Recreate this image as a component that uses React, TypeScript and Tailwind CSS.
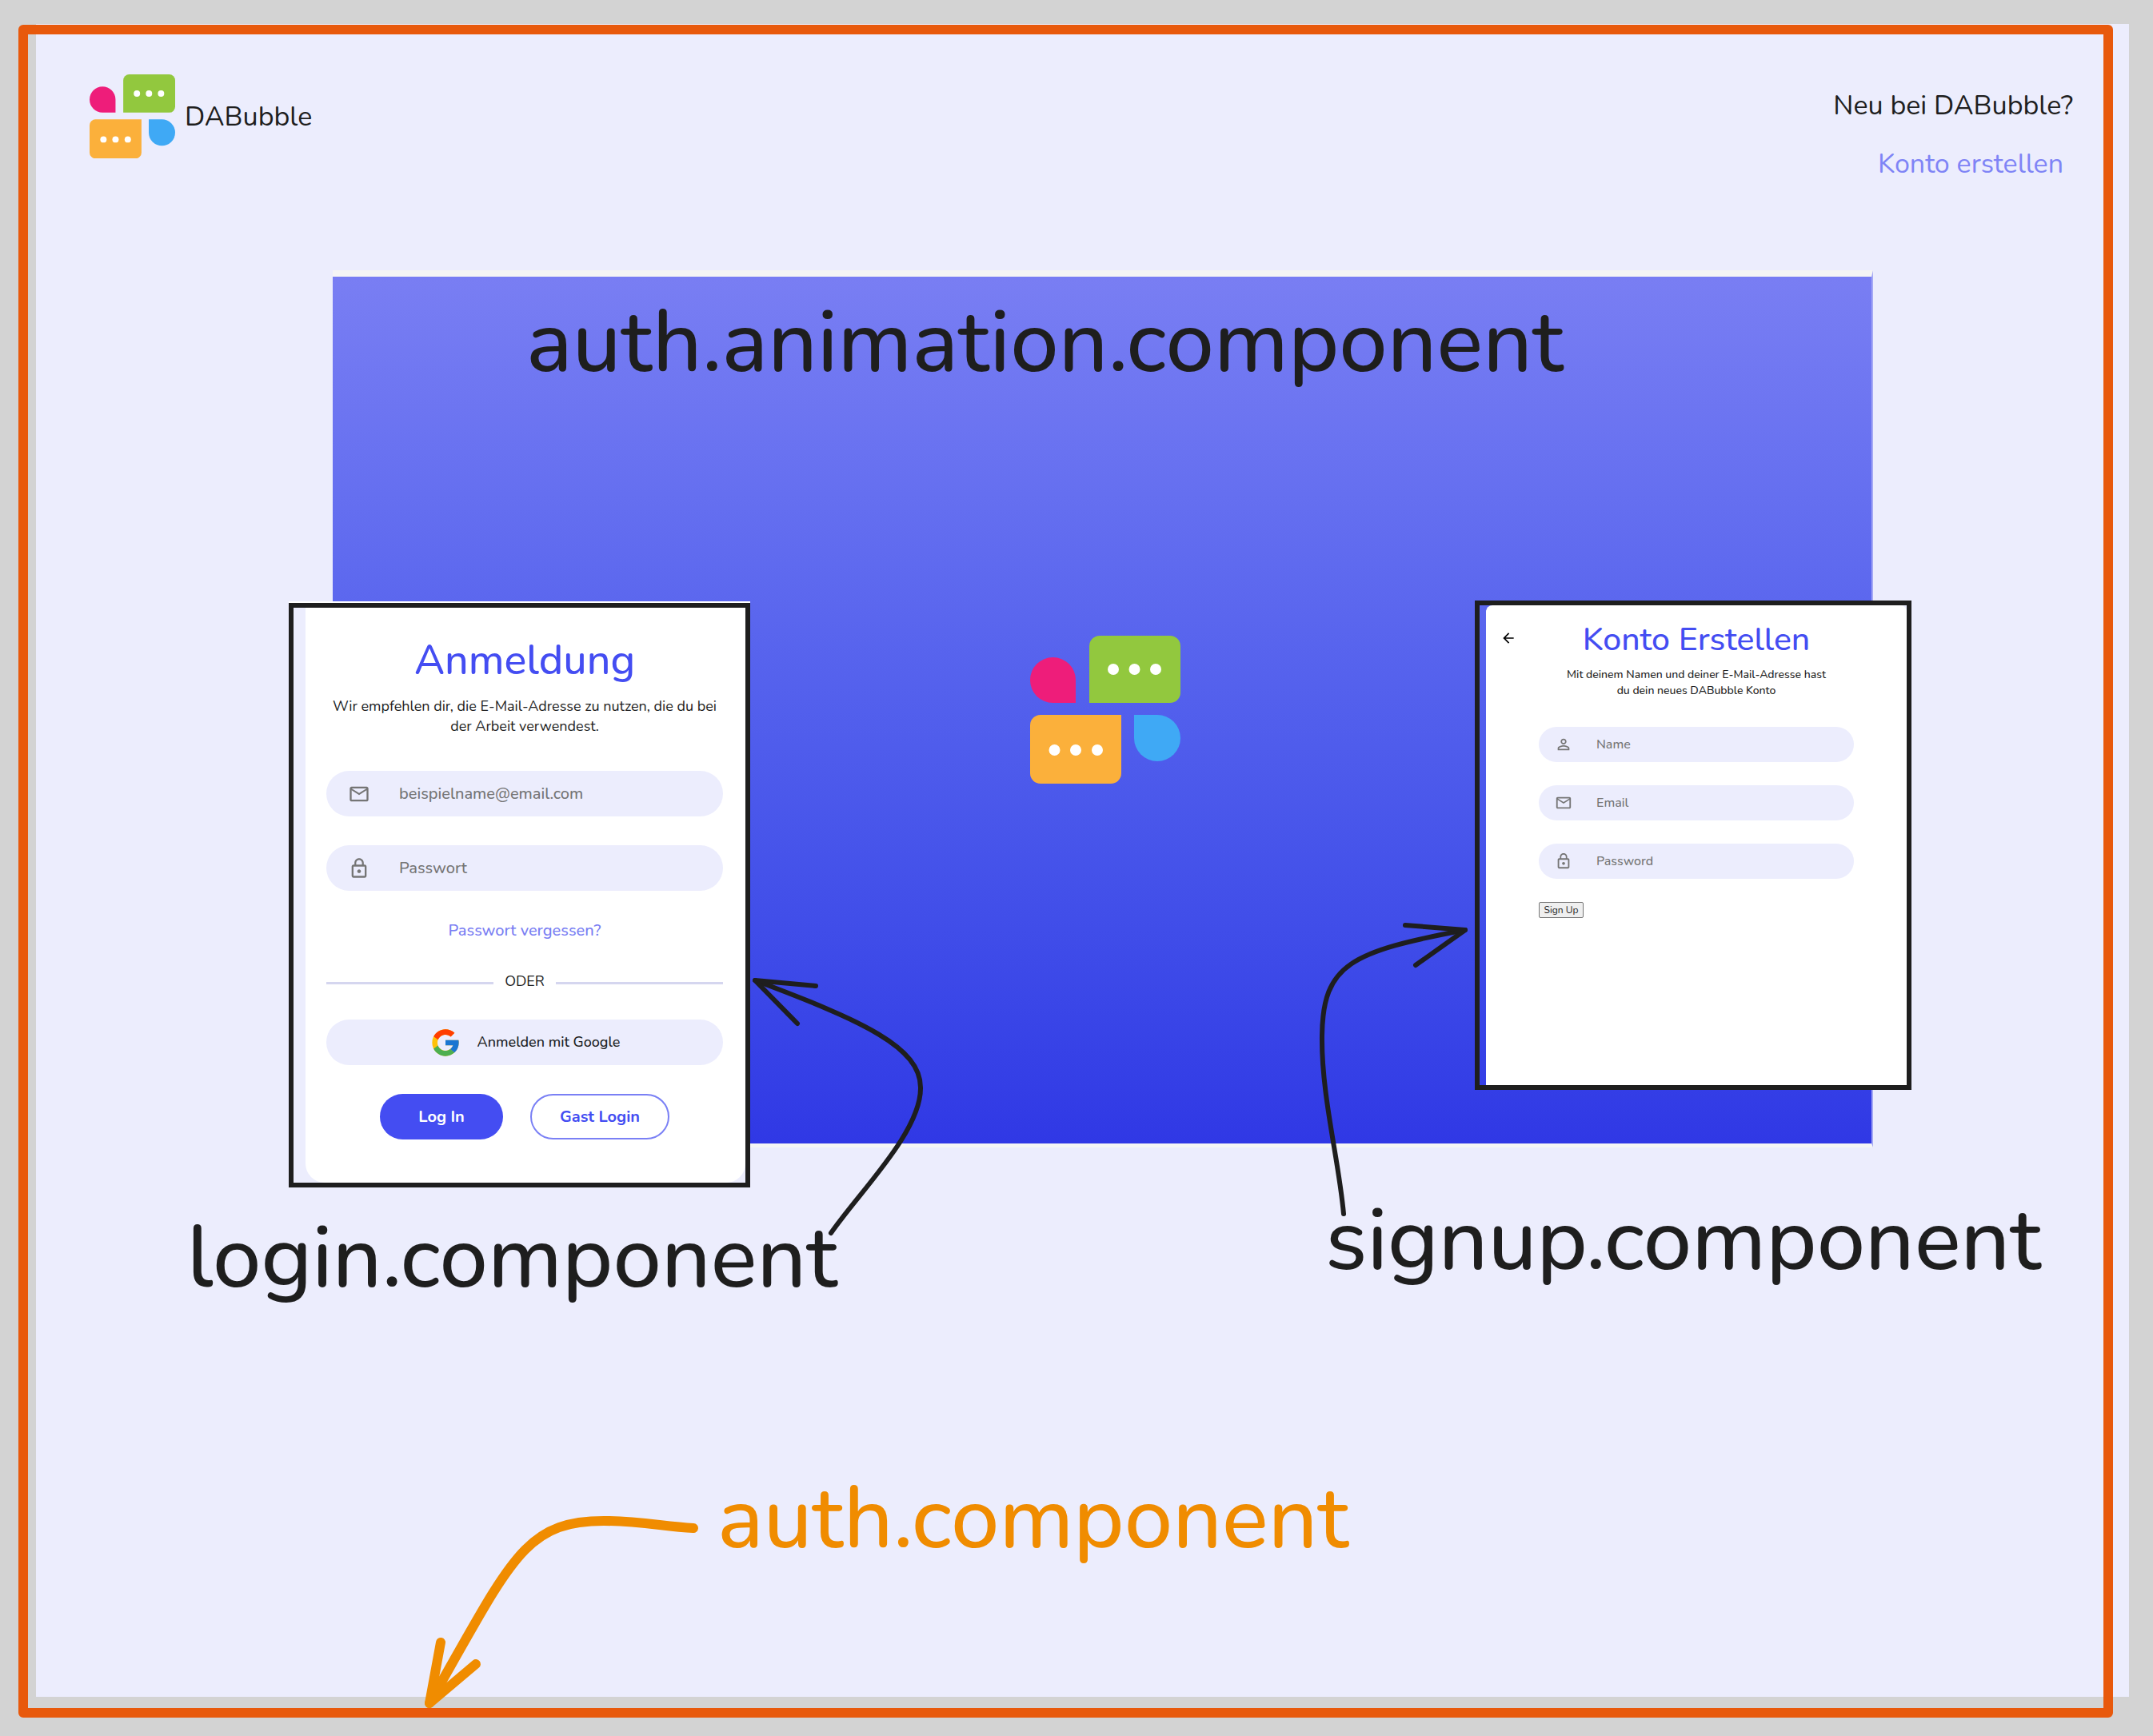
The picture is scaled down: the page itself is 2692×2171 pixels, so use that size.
import React from "react";
import { MdArrowBack, MdLockOutline, MdMailOutline, MdPersonOutline } from "react-icons/md";
import { FcGoogle } from "react-icons/fc";

function BubbleLogo({ className }: { className: string }) {
  return (
    <svg viewBox="0 0 188 185" className={className} role="img" aria-label="DABubble logo">
      <path d="M28.5 27A28.5 28.5 0 0 1 57 55.5V84H28.5A28.5 28.5 0 0 1 28.5 27Z" fill="#ee1d7a" />
      <path d="M87 0H175A13 13 0 0 1 188 13V71A13 13 0 0 1 175 84H74V13A13 13 0 0 1 87 0Z" fill="#92c83e" />
      <path d="M13 99H114V172A13 13 0 0 1 101 185H13A13 13 0 0 1 0 172V112A13 13 0 0 1 13 99Z" fill="#fbb03b" />
      <path d="M130 99H159A29 29 0 1 1 130 128Z" fill="#3fa9f5" />
      <g fill="#fff">
        <circle cx="104" cy="42" r="7" />
        <circle cx="130.500" cy="42" r="7" />
        <circle cx="157" cy="42" r="7" />
        <circle cx="30.500" cy="143" r="7" />
        <circle cx="57" cy="143" r="7" />
        <circle cx="84" cy="143" r="7" />
      </g>
    </svg>
  );
}

type FieldProps = {
  id: string;
  label: string;
  type: string;
  icon: React.ReactNode;
  small?: boolean;
};

function Field({ id, label, type, icon, small }: FieldProps) {
  return (
    <div
      className={
        small
          ? "flex h-[44px] items-center gap-[30px] rounded-full bg-[#ecedfd] pl-5 pr-4 text-[22px] text-[#757575]"
          : "flex h-[57px] items-center gap-9 rounded-full bg-[#ecedfd] pl-[27px] pr-5 text-[28px] text-[#757575]"
      }
    >
      <label htmlFor={id} aria-label={label} className="shrink-0">
        {icon}
      </label>
      <input
        id={id}
        type={type}
        placeholder={label}
        className={
          small
            ? "min-w-0 flex-1 bg-transparent text-[16px] font-medium leading-6 outline-none placeholder:text-[#757575]"
            : "min-w-0 flex-1 bg-transparent text-[20px] font-medium leading-7 outline-none placeholder:text-[#757575]"
        }
      />
    </div>
  );
}

function LoginCard() {
  return (
    <section className="absolute left-[-55px] top-[408px] w-[577px] border-6 border-[#1e1e1e] bg-[#ecedfd] pl-[15px] shadow-[0_-2px_0_#ffffff]">
      <form className="rounded-b-[24px] bg-white pb-[54px] pl-[26px] pr-7 pt-[35px] text-center">
        <h2 className="text-[52px] font-medium leading-[62px] text-[#444df2]">Anmeldung</h2>
        <p className="mt-[14px] text-[18px] leading-[25px]">
          Wir empfehlen dir, die E-Mail-Adresse zu nutzen, die du bei
          <br />
          der Arbeit verwendest.
        </p>
        <div className="mt-[43px] flex flex-col gap-9">
          <Field id="login-email" label="beispielname@email.com" type="email" icon={<MdMailOutline />} />
          <Field id="login-password" label="Passwort" type="password" icon={<MdLockOutline />} />
        </div>
        <a href="#reset" className="mt-9 block text-[20px] font-medium leading-7 text-[#797ef3]">
          Passwort vergessen?
        </a>
        <div className="mt-[37px] flex items-end gap-[14px] text-[18px] leading-6">
          <span className="mb-2 h-[3px] flex-1 bg-[#d5d6ef]" />
          ODER
          <span className="mb-2 h-[3px] flex-1 bg-[#d5d6ef]" />
        </div>
        <button type="button" className="mt-9 flex h-[57px] w-full items-center justify-center gap-5 rounded-full bg-[#ecedfd] text-[18px] font-medium">
          <FcGoogle className="text-[40px]" />
          Anmelden mit Google
        </button>
        <div className="mt-9 flex justify-center gap-[34px] text-[20px] font-bold">
          <button type="submit" className="h-[57px] w-[154px] rounded-full bg-[#444df2] text-white">
            Log In
          </button>
          <button type="button" className="h-[57px] w-[174px] rounded-full border-2 border-[#7a80f5] bg-white text-[#444df2]">
            Gast Login
          </button>
        </div>
      </form>
    </section>
  );
}

function SignupCard() {
  return (
    <section className="absolute right-[-50px] top-[405px] w-[546px] border-6 border-[#1e1e1e] pl-2">
      <form className="rounded-t-[8px] bg-white px-[66px] pb-[209px] pt-[18px]">
        <div className="relative">
          <a href="#login" aria-label="Zurück" className="absolute left-[-48px] top-[13px] text-[20px] text-black">
            <MdArrowBack />
          </a>
          <h2 className="text-center text-[41px] font-medium leading-[50px] text-[#444df2]">Konto Erstellen</h2>
        </div>
        <p className="mt-[9px] text-center text-[14px] font-medium leading-5">
          Mit deinem Namen und deiner E-Mail-Adresse hast
          <br />
          du dein neues DABubble Konto
        </p>
        <div className="mt-[35px] flex flex-col gap-[29px]">
          <Field small id="signup-name" label="Name" type="text" icon={<MdPersonOutline />} />
          <Field small id="signup-email" label="Email" type="email" icon={<MdMailOutline />} />
          <Field small id="signup-password" label="Password" type="password" icon={<MdLockOutline />} />
        </div>
        <button type="submit" className="mt-[29px] block h-5 w-[56px] rounded-[2px] border border-[#767676] bg-[#efefef] text-[12px] leading-4">
          Sign Up
        </button>
      </form>
    </section>
  );
}

export default function App() {
  return (
    <div className="relative flex min-h-screen flex-col bg-[#d3d3d3] pb-[49px] pl-[45px] pr-[30px] pt-[30px] font-[Nunito,Lato,sans-serif] text-[#1e1e1e]">
      <main className="relative flex-1 bg-[#ecedfd]">
        <header className="flex h-[308px] items-start justify-between pl-[67px] pr-[70px] pt-[63px]">
          <a href="#home" className="flex items-center gap-3 text-[34px] leading-10">
            <BubbleLogo className="w-[107px]" />
            DABubble
          </a>
          <div className="flex flex-col items-end gap-[33px] pt-[19px] text-[34px] leading-10">
            <p>Neu bei DABubble?</p>
            <a href="#signup" className="pr-3 text-[#7f84f6]">
              Konto erstellen
            </a>
          </div>
        </header>

        <section className="relative ml-[371px] mr-[320px] flex justify-center border-b-5 border-r-2 border-t-8 border-b-[#f5f5f5] border-r-[#a5a9f5] border-t-[#f5f5f5] bg-linear-to-b from-[#797ef3] to-[#3038e5] pb-[450px] pl-2 pt-[449px]">
          <h1 className="absolute left-[242px] top-[17px] whitespace-nowrap text-[108px] font-medium leading-[132px]">auth.animation.component</h1>
          <BubbleLogo className="w-[188px]" />
          <LoginCard />
          <SignupCard />
        </section>

        <div className="flex items-start justify-between pl-[189px] pr-[110px] pt-[51px] text-[108px] font-medium leading-[132px]">
          <p className="pt-[22px]">login.component</p>
          <p>signup.component</p>
        </div>
        <p className="mt-[194px] pl-[852px] text-[108px] font-medium leading-[132px] text-[#f08c00]">auth.component</p>

        <svg
          viewBox="930 1210 240 350"
          className="pointer-events-none absolute left-[885px] top-[1180px] w-[240px] fill-none stroke-[#1e1e1e] stroke-6"
          strokeLinecap="round"
          strokeLinejoin="round"
          aria-hidden="true"
        >
          <path d="M1039 1542C1075 1490 1152 1415 1151 1360C1151 1310 1080 1277 944 1226" />
          <path d="M1020 1233L944 1226L997 1280" />
        </svg>
        <svg
          viewBox="1640 1140 210 400"
          className="pointer-events-none absolute right-[812px] top-[1110px] w-[210px] fill-none stroke-[#1e1e1e] stroke-6"
          strokeLinecap="round"
          strokeLinejoin="round"
          aria-hidden="true"
        >
          <path d="M1680 1518C1674 1450 1652 1370 1653 1295C1654 1205 1690 1190 1832 1163" />
          <path d="M1757 1157L1832 1163L1770 1207" />
        </svg>
      </main>

      <div className="pointer-events-none absolute bottom-[23px] left-[23px] right-[50px] top-[31px] rounded-[6px] border-12 border-[#e8590c]" />
      <svg
        viewBox="520 1880 360 270"
        className="pointer-events-none absolute bottom-[21px] left-[520px] w-[360px] fill-none stroke-[#f08c00] stroke-12"
        strokeLinecap="round"
        strokeLinejoin="round"
        aria-hidden="true"
      >
        <path d="M867 1911C830 1909 800 1902 755 1902C655 1902 640 1950 537 2130" />
        <path d="M551 2054L537 2130L595 2081" />
      </svg>
    </div>
  );
}
